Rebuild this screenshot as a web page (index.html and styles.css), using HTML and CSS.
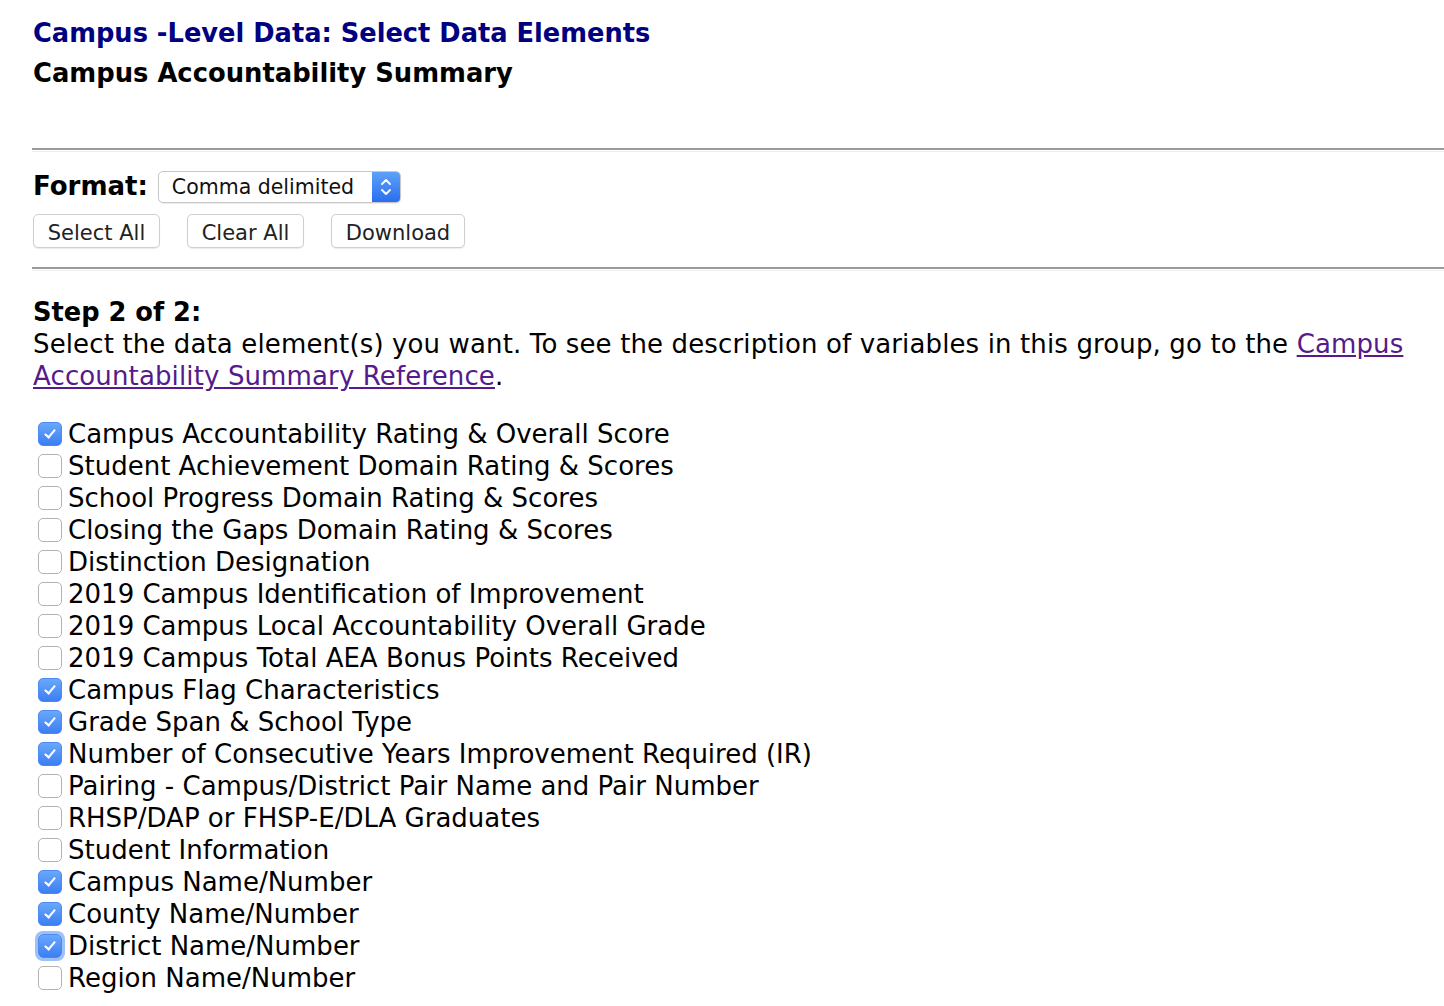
FILE: index.html
```html
<!DOCTYPE html>
<html>
<head>
<meta charset="utf-8">
<link rel="stylesheet" href="styles.css">
</head>
<body>
<div class="page">
  <h1 class="title">Campus -Level Data: Select Data Elements</h1>
  <h2 class="subtitle">Campus Accountability Summary</h2>
  <div class="rule rule-top"></div>
  <div class="format-row">
    <span class="format-label">Format:</span>
    <span class="select">
      <span class="select-text">Comma delimited</span>
      <span class="select-arrow">
        <svg width="14" height="22" viewBox="0 0 14 22"><path d="M3 8 L7 4 L11 8" fill="none" stroke="#fff" stroke-width="1.8" stroke-linecap="round" stroke-linejoin="round"/><path d="M3 14 L7 18 L11 14" fill="none" stroke="#fff" stroke-width="1.8" stroke-linecap="round" stroke-linejoin="round"/></svg>
      </span>
    </span>
  </div>
  <div class="button-row">
    <span class="btn btn-select">Select All</span>
    <span class="btn btn-clear">Clear All</span>
    <span class="btn btn-download">Download</span>
  </div>
  <div class="rule rule-bottom"></div>
  <h3 class="step">Step 2 of 2:</h3>
  <p class="intro">Select the data element(s) you want. To see the description of variables in this group, go to the <a href="#">Campus Accountability Summary Reference</a>.</p>
  <ul class="items">
    <li><span class="cb on"></span>Campus Accountability Rating &amp; Overall Score</li>
    <li><span class="cb"></span>Student Achievement Domain Rating &amp; Scores</li>
    <li><span class="cb"></span>School Progress Domain Rating &amp; Scores</li>
    <li><span class="cb"></span>Closing the Gaps Domain Rating &amp; Scores</li>
    <li><span class="cb"></span>Distinction Designation</li>
    <li><span class="cb"></span>2019 Campus Identification of Improvement</li>
    <li><span class="cb"></span>2019 Campus Local Accountability Overall Grade</li>
    <li><span class="cb"></span>2019 Campus Total AEA Bonus Points Received</li>
    <li><span class="cb on"></span>Campus Flag Characteristics</li>
    <li><span class="cb on"></span>Grade Span &amp; School Type</li>
    <li><span class="cb on"></span>Number of Consecutive Years Improvement Required (IR)</li>
    <li><span class="cb"></span>Pairing - Campus/District Pair Name and Pair Number</li>
    <li><span class="cb"></span>RHSP/DAP or FHSP-E/DLA Graduates</li>
    <li><span class="cb"></span>Student Information</li>
    <li><span class="cb on"></span>Campus Name/Number</li>
    <li><span class="cb on"></span>County Name/Number</li>
    <li><span class="cb on focus"></span>District Name/Number</li>
    <li><span class="cb"></span>Region Name/Number</li>
  </ul>
</div>
</body>
</html>
```

FILE: styles.css
```css
html, body {
  margin: 0;
  padding: 0;
  background: #fff;
}
body {
  font-family: "DejaVu Sans", Verdana, sans-serif;
  color: #000;
  overflow: hidden;
}
.page {
  padding: 14px 0 0 33px;
}
.title {
  margin: 0;
  font-family: "DejaVu Sans", sans-serif;
  font-weight: bold;
  font-size: 25.7px;
  line-height: 38px;
  color: #000080;
}
.subtitle {
  margin: 2px 0 0 0;
  font-family: "DejaVu Sans", sans-serif;
  font-weight: bold;
  font-size: 25.8px;
  line-height: 38px;
}
.rule {
  height: 1px;
  border-top: 2px solid #9a9a9a;
  border-bottom: 1px solid #eeeeee;
  margin-left: -1px;
}
.rule-top {
  margin-top: 56px;
}
.format-row {
  display: flex;
  align-items: center;
  margin-top: 17px;
  height: 34px;
}
.format-label {
  font-weight: bold;
  font-size: 26px;
  margin-right: 10px;
}
.select {
  display: flex;
  align-items: stretch;
  height: 32px;
  width: 243px;
  border: 1px solid #c8c8c8;
  border-radius: 5px;
  box-sizing: border-box;
  overflow: hidden;
  box-shadow: 0 1px 1px rgba(0,0,0,0.08);
  margin-top: 1px;
}
.select-text {
  flex: 1;
  font-size: 20.5px;
  line-height: 31px;
  padding-left: 13px;
  color: #111;
}
.select-arrow {
  width: 28px;
  background: linear-gradient(#5ea1f8, #2a6ef0);
  display: flex;
  align-items: center;
  justify-content: center;
}
.button-row {
  display: flex;
  gap: 27px;
  margin-top: 11px;
  height: 34px;
}
.btn {
  display: inline-flex;
  align-items: center;
  justify-content: center;
  height: 34px;
  padding-top: 3px;
  box-sizing: border-box;
  border: 1px solid #cfcfcf;
  border-radius: 5px;
  font-size: 21px;
  color: #222;
  background: #fff;
  box-shadow: 0 1px 1px rgba(0,0,0,0.08);
}
.btn-select { width: 127px; }
.btn-clear { width: 117px; }
.btn-download { width: 134px; }
.rule-bottom {
  margin-top: 19px;
}
.step {
  margin: 25px 0 0 0;
  font-family: "DejaVu Sans", sans-serif;
  font-weight: bold;
  font-size: 25.7px;
  line-height: 32px;
}
.intro {
  margin: 0;
  font-size: 26px;
  line-height: 32px;
  width: 1400px;
  letter-spacing: 0.13px;
}
.intro a {
  color: #551a8b;
}
.items {
  list-style: none;
  margin: 26px 0 0 0;
  padding: 0;
}
.items li {
  display: flex;
  align-items: center;
  height: 32px;
  font-size: 26px;
  white-space: nowrap;
}
.cb {
  position: relative;
  flex: none;
  width: 24px;
  height: 24px;
  box-sizing: border-box;
  margin: 0 6px 0 5px;
  border: 1px solid #b3b3b3;
  border-radius: 5px;
  background: #fff;
}
.cb.on {
  border-color: #4a8af4;
  background: linear-gradient(#6aa8fa, #3b7ef3);
}
.cb.on::after {
  content: "";
  position: absolute;
  left: 8px;
  top: 4px;
  width: 4px;
  height: 9px;
  border-right: 2px solid #fff;
  border-bottom: 2px solid #fff;
  transform: rotate(40deg);
}
.cb.focus {
  box-shadow: 0 0 0 3px rgba(80, 140, 240, 0.55);
}
```
